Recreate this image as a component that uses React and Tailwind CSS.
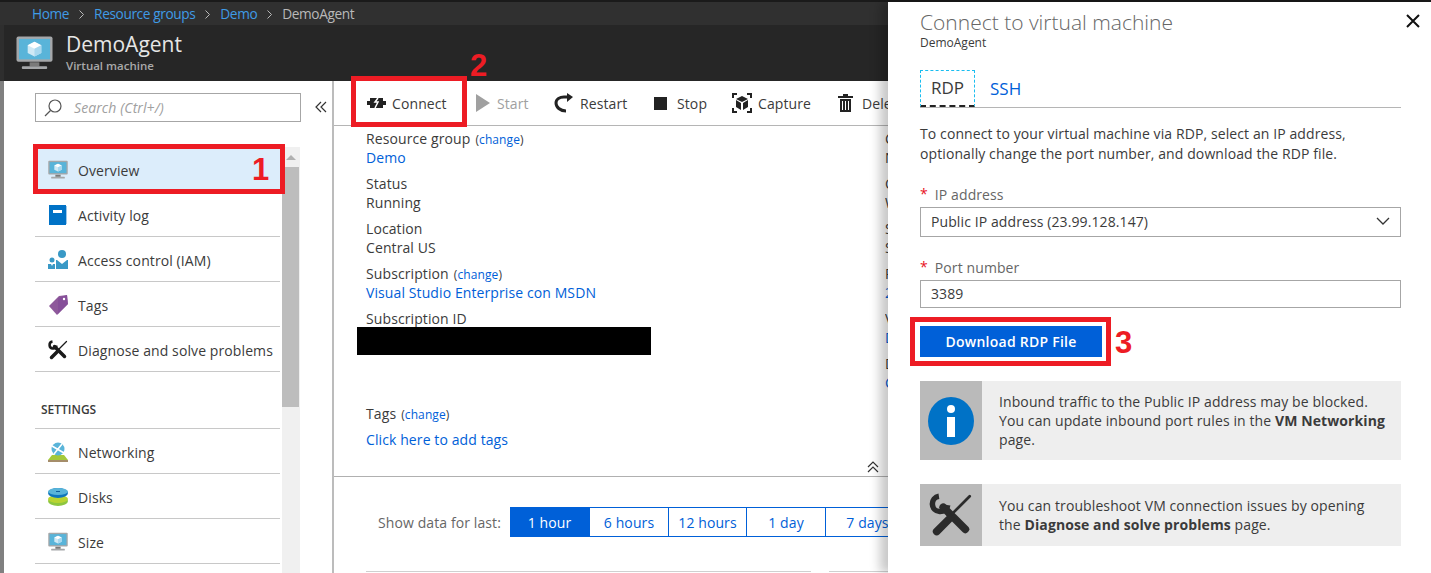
import React from "react";

const Monitor = ({ s = 20 }) => (
  <svg width={s} height={s} viewBox="0 0 38 36">
    <rect x="0.5" y="0.5" width="37" height="26" rx="2" fill="#a5a7a9" />
    <rect x="3" y="3" width="32" height="21" fill="#59b4d9" />
    <path d="M19 6l7 3.5v8L19 21l-7-3.5v-8z" fill="#cfe9f5" />
    <path d="M19 6l7 3.5-7 3.5-7-3.5z" fill="#fff" />
    <path d="M19 13l7-3.5v8L19 21z" fill="#a8d8ef" />
    <rect x="14" y="27" width="10" height="4" fill="#7a7a7a" />
    <rect x="6" y="31" width="26" height="3" rx="1" fill="#a5a7a9" />
  </svg>
);

const Book = () => (
  <svg width="20" height="20" viewBox="0 0 20 20">
    <rect x="1" y="0" width="17" height="20" fill="#0072c6" />
    <rect x="18" y="1" width="1" height="18" fill="#9cc8ea" />
    <rect x="5" y="5" width="9" height="3" fill="#fff" />
  </svg>
);

const Iam = () => (
  <svg width="20" height="20" viewBox="0 0 20 20">
    <circle cx="14" cy="4" r="4" fill="#3999c6" />
    <path d="M9 10l5 4 5-4h1v9H8v-9z" fill="#3999c6" />
    <circle cx="4" cy="10" r="2.5" fill="#3999c6" />
    <path d="M0 14h3l1 2 1-2h2v5H0z" fill="#3999c6" />
  </svg>
);

const Tag = () => (
  <svg width="20" height="20" viewBox="0 0 20 20">
    <path d="M1 11L11 1l8-1 1 9L9 20z" fill="#68217a" opacity="0.75" />
    <path d="M10 19L20 9l-1-9-9 3z" fill="#804998" opacity="0.6" />
    <circle cx="16" cy="4" r="1.2" fill="#fff" />
  </svg>
);

const Tools = ({ s = 20, c = "#1a1a1a" }) => (
  <svg width={s} height={s} viewBox="0 0 40 40" fill="none" stroke={c} strokeLinecap="round">
    <path d="M9 3A7 7 0 1 0 17 11" strokeWidth="5" strokeLinecap="butt" />
    <path d="M13 13L33 33" strokeWidth="7" />
    <path d="M37 3L21 19" strokeWidth="2.5" />
    <path d="M18 20l3 3" strokeWidth="4" />
    <path d="M18 24L7 35" strokeWidth="7" />
  </svg>
);

const Net = () => (
  <svg width="20" height="20" viewBox="0 0 20 20">
    <path d="M4 13h12l4 5H0z" fill="#a4c93a" />
    <rect x="0" y="18" width="20" height="2" fill="#a58d6a" />
    <circle cx="10" cy="7" r="6.5" fill="#59b4d9" />
    <path d="M4 4l12 7M6 12l8-10" stroke="#fff" strokeWidth="1.6" />
  </svg>
);

const Disk = () => (
  <svg width="20" height="18" viewBox="0 0 20 18">
    <ellipse cx="10" cy="13" rx="10" ry="5" fill="#8dc63f" />
    <ellipse cx="10" cy="11" rx="10" ry="4" fill="#b8d432" />
    <ellipse cx="10" cy="5" rx="10" ry="5" fill="#0f76bc" />
    <ellipse cx="10" cy="3.5" rx="10" ry="3.5" fill="#59b4d9" />
    <rect x="8" y="3" width="4" height="1" fill="#0f5f9a" />
  </svg>
);

const Crumb = () => (
  <svg width="5" height="9" viewBox="0 0 5 9" fill="none" stroke="#b9b9b9" strokeWidth="1">
    <path d="M0.5 0.5l4 4-4 4" />
  </svg>
);

const Row = ({ icon, label, active }) => (
  <div className={`flex h-[45px] items-center border-b border-[#c8c8c8] pt-[2px] ${active ? "bg-[#dcedfb]" : ""}`}>
    <div className="flex w-[43px] justify-center pl-[2px]">{icon}</div>
    <span className="whitespace-nowrap">{label}</span>
  </div>
);

const Tool = ({ icon, label, muted, w }) => (
  <div className={`flex items-center gap-[6px] ${w} ${muted ? "text-[#a0a0a0]" : ""}`}>
    {icon}
    <span className="whitespace-nowrap">{label}</span>
  </div>
);

const Field = ({ label, change, value, link, children }) => (
  <div className="mb-[7px]">
    <div className="h-[19px] leading-[19px] whitespace-nowrap">
      {label}
      {change && (
        <span className="ml-[5px] text-[12px]">
          (<span className="text-[#0060d8]">change</span>)
        </span>
      )}
    </div>
    {value && <div className={`h-[19px] leading-[19px] whitespace-nowrap ${link ? "text-[#0060d8]" : ""}`}>{value}</div>}
    {children}
  </div>
);

const Seg = ({ label, active, w }) => (
  <div className={`flex h-full items-center justify-center border-r border-[#0060d8] ${w} ${active ? "bg-[#0060d8] text-white" : "text-[#0060d8]"}`}>
    {label}
  </div>
);

const Mark = ({ children, cls }) => (
  <div className={`absolute font-['Liberation_Sans'] text-[31px] leading-none font-bold tracking-normal text-[#ed1c24] ${cls}`}>{children}</div>
);

export default function App() {
  return (
    <div className="relative flex h-[573px] w-full flex-col overflow-hidden bg-white font-['Open_Sans'] text-[14px] tracking-[0.1px] text-[#3b3b3b]">
      <div className="h-[2px] bg-[#1a1a1a]" />
      <div className="flex h-[23px] items-center gap-[10px] bg-[#303030] pt-[2px] pl-[32px] text-[13.7px] tracking-[-0.4px] text-[#b9b9b9]">
        <span className="text-[#3f9be6]">Home</span>
        <Crumb />
        <span className="text-[#3f9be6]">Resource groups</span>
        <Crumb />
        <span className="text-[#3f9be6]">Demo</span>
        <Crumb />
        <span>DemoAgent</span>
      </div>
      <div className="flex h-[56px] items-center gap-[13px] border-l-4 border-[#2e2e2e] bg-[#262626] pl-[12px]">
        <Monitor s={37} />
        <div className="pb-[3px]">
          <div className="text-[21px] leading-[27px] tracking-normal text-[#e6e6e6]">DemoAgent</div>
          <div className="text-[11.5px] leading-[15px] font-semibold tracking-normal text-[#a9a9a9]">Virtual machine</div>
        </div>
      </div>

      <div className="flex min-h-0 flex-1 border-l-4 border-[#808080]">
        <div className="relative w-[330px] shrink-0 overflow-hidden border-r-2 border-[#bcbcbc] pl-[31px]">
          <div className="mt-[12px] flex h-[29px] w-[266px] items-center gap-[11px] border border-[#a6a6a6] pl-[7px] text-[#a0a0a0] italic">
            <svg width="20" height="20" viewBox="0 0 20 20" fill="none" stroke="#555" strokeWidth="1.2">
              <circle cx="12" cy="8" r="6" />
              <path d="M7.5 12.5L2 18" />
            </svg>
            <span>Search (Ctrl+/)</span>
          </div>
          <div className="mt-[25px] flex">
            <div className="w-[245px] shrink-0">
              <Row active icon={<Monitor s={20} />} label="Overview" />
              <Row icon={<Book />} label="Activity log" />
              <Row icon={<Iam />} label="Access control (IAM)" />
              <Row icon={<Tag />} label="Tags" />
              <Row icon={<Tools />} label="Diagnose and solve problems" />
              <div className="flex h-[57px] items-end border-b border-[#c8c8c8] pb-[9px] pl-[6px] text-[12px] font-semibold tracking-normal">SETTINGS</div>
              <Row icon={<Net />} label="Networking" />
              <Row icon={<Disk />} label="Disks" />
              <Row icon={<Monitor s={20} />} label="Size" />
            </div>
            <div className="ml-[2px] flex h-[430px] w-[18px] flex-col bg-[#f0f0f0]">
              <div className="flex h-[20px] items-center justify-center">
                <div className="h-0 w-0 border-x-[5px] border-b-[5px] border-x-transparent border-b-[#b0b0b0]" />
              </div>
              <div className="h-[240px] w-[17px] bg-[#bdbdbd]" />
            </div>
          </div>
          <svg className="absolute top-[20px] left-[311px]" width="12" height="12" viewBox="0 0 12 12" fill="none" stroke="#333" strokeWidth="1.2">
            <path d="M6 1L1 6l5 5M11 1L6 6l5 5" />
          </svg>
        </div>

        <div className="w-[554px] shrink-0 overflow-hidden">
          <div className="flex h-[45px] items-center overflow-hidden border-b border-[#b5b5b5] pl-[33px]">
            <Tool w="w-[108px] shrink-0" label="Connect" icon={
              <svg width="19" height="12" viewBox="0 0 19 12" fill="#222">
                <rect x="3" y="1" width="13" height="10" />
                <rect x="0" y="4" width="19" height="4" />
                <path d="M11 1L8 5h3L8 11" fill="none" stroke="#fff" strokeWidth="1.5" />
              </svg>
            } />
            <Tool muted w="w-[79px] shrink-0" label="Start" icon={
              <svg width="16" height="20" viewBox="0 0 16 20" fill="#a0a0a0"><path d="M1 1l14 9-14 9z" /></svg>
            } />
            <Tool w="w-[100px] shrink-0" label="Restart" icon={
              <svg width="20" height="20" viewBox="0 0 20 20" fill="none" stroke="#222" strokeWidth="3">
                <path d="M12 18c-6 0-10-4-10-8 0-4 4-6 8-6h5" />
                <path d="M13 0l6 4-6 5z" fill="#222" stroke="none" />
              </svg>
            } />
            <Tool w="w-[78px] shrink-0" label="Stop" icon={<div className="mr-[4px] h-[13px] w-[13px] bg-[#222]" />} />
            <Tool w="w-[106px] shrink-0" label="Capture" icon={
              <svg width="20" height="20" viewBox="0 0 20 20" fill="#222">
                <path d="M0 0h5v2H2v3H0zM15 0h5v5h-2V2h-3zM0 15h2v3h3v2H0zM18 15h2v5h-5v-2h3z" />
                <path d="M10 3l6 3-6 3-6-3zM4 7l5 3v7l-5-3zM16 7l-5 3v7l5-3z" />
              </svg>
            } />
            <Tool w="w-[90px] shrink-0" label="Delete" icon={
              <svg className="mr-[3px]" width="15" height="18" viewBox="0 0 15 18" fill="#222">
                <path d="M0 2h5V0h5v2h5v2H0zM2 5h11v13H2zM4 7v9h1V7zM7 7v9h1V7zM10 7v9h1V7z" fillRule="evenodd" />
              </svg>
            } />
          </div>

          <div className="flex h-[351px] border-b border-[#b0b0b0]">
            <div className="relative w-[551px] shrink-0 pt-[3px] pl-[32px]">
              <Field label="Resource group" change value="Demo" link />
              <Field label="Status" value="Running" />
              <Field label="Location" value="Central US" />
              <Field label="Subscription" change value="Visual Studio Enterprise con MSDN" link />
              <Field label="Subscription ID">
                <div className="-ml-[9px] h-[28px] w-[294px] -translate-y-[1px] bg-black" />
              </Field>
              <div className="mt-[48px]">
                <Field label="Tags" change />
              </div>
              <div className="h-[19px] leading-[19px] whitespace-nowrap text-[#0060d8]">Click here to add tags</div>
              <svg className="absolute top-[335px] left-[533px]" width="12" height="12" viewBox="0 0 12 12" fill="none" stroke="#333" strokeWidth="1.2">
                <path d="M1 6l5-5 5 5M1 11l5-5 5 5" />
              </svg>
            </div>
            <div className="min-w-0 flex-1 overflow-hidden pt-[3px]">
              <Field label="Computer" value="Not available" />
              <Field label="Operating system" value="Windows" />
              <Field label="Size" value="Standard" />
              <Field label="Public IP" value="23.99.128.147" link />
              <Field label="Virtual network" value="Demo" link />
              <Field label="DNS name" value="Configure" link />
            </div>
          </div>

          <div className="mt-[30px] flex h-[30px] items-center overflow-hidden pl-[44px]">
            <span className="mr-[9px] w-[123px] shrink-0 whitespace-nowrap text-[#666]">Show data for last:</span>
            <div className="flex h-full w-[400px] shrink-0 border-y border-[#0060d8]">
              <Seg active w="w-[80px]" label="1 hour" />
              <Seg w="w-[79px]" label="6 hours" />
              <Seg w="w-[78px]" label="12 hours" />
              <Seg w="w-[79px]" label="1 day" />
              <Seg w="w-[84px]" label="7 days" />
            </div>
          </div>
          <div className="mt-[34px] flex pl-[32px]">
            <div className="h-px w-[450px] bg-[#d0d0d0]" />
            <div className="ml-[18px] h-px w-[60px] bg-[#d0d0d0]" />
          </div>
        </div>
      </div>

      <div className="absolute top-[2px] right-0 bottom-0 w-[543px] bg-white pt-[7px] pr-[30px] pl-[32px] shadow-[-8px_0_10px_rgba(0,0,0,0.22)]">
        <div className="text-[21px] leading-[26px] font-light tracking-normal text-[#666]">Connect to virtual machine</div>
        <div className="text-[12px] leading-[16px] tracking-normal">DemoAgent</div>
        <svg className="absolute top-[12px] right-[11px]" width="14" height="14" viewBox="0 0 14 14" stroke="#111" strokeWidth="2">
          <path d="M1 1l12 12M13 1L1 13" />
        </svg>
        <div className="mt-[19px] flex h-[38px] items-stretch border-b border-[#b5b5b5] text-[17px] tracking-normal">
          <div className="flex w-[55px] items-center justify-center border border-b-2 border-dashed border-[#19bdf0] border-b-[#222]">RDP</div>
          <div className="ml-[15px] flex items-center text-[#0060d8]">SSH</div>
        </div>
        <p className="mt-[16px] leading-[20px]">
          To connect to your virtual machine via RDP, select an IP address,
          <br />
          optionally change the port number, and download the RDP file.
        </p>
        <div className="mt-[19px] flex h-[24px] items-center pb-[2px] text-[#666]">
          <span className="mr-[7px] text-[14px] leading-none text-[#e81123]">*</span>IP address
        </div>
        <div className="flex h-[30px] items-center justify-between border border-[#a6a6a6] pr-[10px] pb-[2px] pl-[10px]">
          <span>Public IP address (23.99.128.147)</span>
          <svg width="14" height="8" viewBox="0 0 14 8" fill="none" stroke="#333" strokeWidth="1.3">
            <path d="M1 1l6 6 6-6" />
          </svg>
        </div>
        <div className="mt-[19px] flex h-[24px] items-center pb-[2px] text-[#666]">
          <span className="mr-[7px] text-[14px] leading-none text-[#e81123]">*</span>Port number
        </div>
        <div className="flex h-[28px] items-center border border-[#a6a6a6] pb-[2px] pl-[10px]">3389</div>
        <div className="mt-[18px] flex h-[31px] w-[182px] items-center justify-center bg-[#0060d8] font-semibold tracking-[0.25px] text-white">Download RDP File</div>
        <div className="mt-[24px] flex h-[79px] bg-[#eeeeee]">
          <div className="flex w-[62px] items-center justify-center bg-[#bababa]">
            <svg width="46" height="48" viewBox="0 0 46 48">
              <ellipse cx="23" cy="24" rx="23" ry="24" fill="#0072c6" />
              <circle cx="23" cy="12" r="4" fill="#fff" />
              <rect x="19" y="20" width="8" height="20" fill="#fff" />
            </svg>
          </div>
          <div className="flex items-center pl-[17px] leading-[19px]">
            <p>
              Inbound traffic to the Public IP address may be blocked.
              <br />
              You can update inbound port rules in the <b>VM Networking</b>
              <br />
              page.
            </p>
          </div>
        </div>
        <div className="mt-[24px] flex h-[62px] bg-[#eeeeee]">
          <div className="flex w-[62px] items-center justify-center bg-[#bababa]">
            <Tools s={44} c="#2b2b2b" />
          </div>
          <div className="flex items-center pl-[17px] leading-[19px]">
            <p>
              You can troubleshoot VM connection issues by opening
              <br />
              the <b>Diagnose and solve problems</b> page.
            </p>
          </div>
        </div>
      </div>

      <div className="absolute top-[144px] left-[33px] h-[50px] w-[252px] border-[5px] border-[#ed1c24]" />
      <div className="absolute top-[76px] left-[351px] h-[51px] w-[116px] border-[5px] border-[#ed1c24]" />
      <div className="absolute top-[317px] left-[910px] h-[49px] w-[201px] border-[5px] border-[#ed1c24]" />
      <Mark cls="top-[154px] left-[252px]">1</Mark>
      <Mark cls="top-[50px] left-[470px]">2</Mark>
      <Mark cls="top-[327px] left-[1115px]">3</Mark>
    </div>
  );
}
